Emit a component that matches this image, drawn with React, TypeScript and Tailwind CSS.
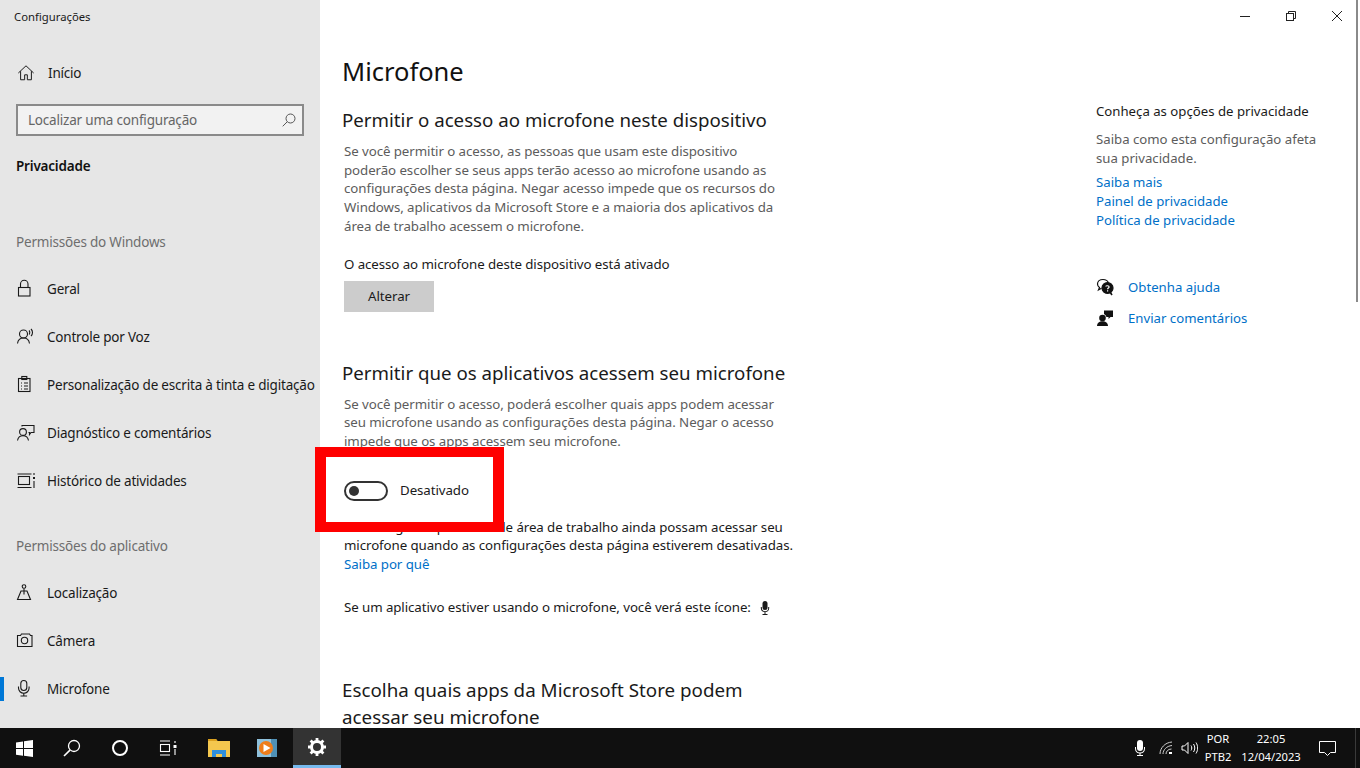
import type { ReactNode } from "react";

function Svg({ children, size = 20, className = "" }: { children: ReactNode; size?: number; className?: string }) {
  return (
    <svg width={size} height={size} viewBox="0 0 20 20" fill="none" stroke="currentColor" strokeWidth="1.1" className={className}>
      {children}
    </svg>
  );
}

const homeIcon = (
  <Svg size={18}>
    <path d="M1.500 10L10 2l8.500 8" />
    <path d="M4 8v9.500h4.500V12h3v5.500H16V8" />
  </Svg>
);

const lockIcon = (
  <Svg>
    <rect x="2.500" y="8.500" width="11.500" height="8.500" />
    <path d="M4.500 8.500V5a3.700 3.700 0 0 1 7.500 0v3.500" />
  </Svg>
);

const voiceIcon = (
  <Svg>
    <circle cx="7.500" cy="7" r="4" />
    <path d="M1.500 16.500c.5-3.500 3-5.500 6-5.500s5.500 2 6 5.500" />
    <path d="M13 3.500c1 1 1 3 0 4M15 2c2 2 2 5 0 7" />
  </Svg>
);

const inkIcon = (
  <Svg>
    <rect x="2.500" y="3.500" width="11.500" height="13" />
    <rect x="5.800" y="1.500" width="5" height="3" />
    <path d="M5 8h1M8 8h4M5 11h1M8 11h4M5 14h1M8 14h4" />
  </Svg>
);

const diagIcon = (
  <Svg>
    <circle cx="7" cy="9" r="3.400" />
    <path d="M1.500 17.500c.5-3 2.700-4.700 5.500-4.700s5 1.700 5.500 4.700" />
    <path d="M6 3.500V2.500h12v7h-3l-1.500 2v-2h-1" />
  </Svg>
);

const historyIcon = (
  <Svg>
    <rect x="2.500" y="5.500" width="11" height="8" />
    <path d="M1.500 3h14M1.500 16.500h14M18 2v2M18 10v7" />
    <rect x="17" y="6" width="2" height="2" fill="currentColor" stroke="none" />
  </Svg>
);

const locationIcon = (
  <Svg>
    <circle cx="8" cy="3.500" r="1.800" />
    <path d="M8 5.500v6M5 8h6l3.500 8.500h-13z" />
  </Svg>
);

const cameraIcon = (
  <Svg>
    <path d="M1.500 4.500h3l1-1.500h8l1 1.500h1.500v11h-14.500z" />
    <circle cx="8.500" cy="9.500" r="3.200" />
  </Svg>
);

const micIcon = (
  <Svg>
    <rect x="4.800" y="1.500" width="6" height="10" rx="3" />
    <path d="M2.500 7.500v1.500a5.300 5.300 0 0 0 10.600 0V7.500M7.800 14.300v2.700M4.500 17h6.600" />
  </Svg>
);

function NavRow({ icon, label, active }: { icon: ReactNode; label: string; active?: boolean }) {
  return (
    <div className="relative h-12 flex items-center pl-[16px] text-[#1a1a1a]">
      {active && <span className="absolute left-0 top-[12px] h-6 w-1 bg-[#0078d7]" />}
      <span className="w-[31px] shrink-0 flex items-center">{icon}</span>
      <span className="whitespace-nowrap">{label}</span>
    </div>
  );
}

function Sidebar() {
  return (
    <aside className="w-[320px] shrink-0 bg-[#e6e6e6] flex flex-col overflow-hidden text-[13.5px] tracking-[-0.2px]">
      <div className="h-[34px] pl-[14px] pt-[9px] text-[11.3px] tracking-normal leading-4 text-[#1a1a1a]">Configurações</div>
      <div className="mt-[15px] h-12 -mb-[3px] flex items-center pl-[17px] text-[#1a1a1a]">
        <span className="w-[31px] shrink-0 flex">{homeIcon}</span>
        Início
      </div>
      <div className="mx-[16px] mt-[10px] h-[32px] shrink-0 border-2 border-[#8a8a8a] bg-[#f2f2f2] flex items-center justify-between pl-[10px] pr-[6px] text-[#666666]">
        <span>Localizar uma configuração</span>
        <svg width="14" height="14" viewBox="0 0 14 14" fill="none" stroke="#555555" strokeWidth="1">
          <circle cx="8.500" cy="5.500" r="4.500" />
          <path d="M5.200 8.800L.7 13.300" />
        </svg>
      </div>
      <div className="mt-[20px] pl-[16px] h-[20px] leading-5 font-semibold text-[#111111]">Privacidade</div>
      <div className="mt-[56px] pl-[16px] h-[20px] leading-5 text-[#6e6e6e]">Permissões do Windows</div>
      <div className="mt-[13px]">
        <NavRow icon={lockIcon} label="Geral" />
        <NavRow icon={voiceIcon} label="Controle por Voz" />
        <NavRow icon={inkIcon} label="Personalização de escrita à tinta e digitação" />
        <NavRow icon={diagIcon} label="Diagnóstico e comentários" />
        <NavRow icon={historyIcon} label="Histórico de atividades" />
      </div>
      <div className="mt-[31px] pl-[16px] h-[20px] leading-5 text-[#6e6e6e]">Permissões do aplicativo</div>
      <div className="mt-[13px]">
        <NavRow icon={locationIcon} label="Localização" />
        <NavRow icon={cameraIcon} label="Câmera" />
        <NavRow icon={micIcon} label="Microfone" active />
      </div>
    </aside>
  );
}

function Body({ lines, className = "" }: { lines: string[]; className?: string }) {
  return (
    <div className={`shrink-0 leading-[18.700px] text-[#5c5c5c] pl-[2px] whitespace-nowrap ${className}`}>
      {lines.map((l) => (
        <div key={l}>{l}</div>
      ))}
    </div>
  );
}

function MainColumn() {
  return (
    <div className="w-[700px] shrink-0 pl-[22px] flex flex-col text-[#1a1a1a] text-[13.3px] tracking-[-0.08px]">
      <h1 className="shrink-0 mt-[51px] text-[25.500px] tracking-normal leading-10 font-normal text-[#111111]">Microfone</h1>
      <h2 className="shrink-0 mt-[15px] text-[18.700px] tracking-normal leading-7 font-normal">Permitir o acesso ao microfone neste dispositivo</h2>
      <Body
        className="mt-[8px]"
        lines={[
          "Se você permitir o acesso, as pessoas que usam este dispositivo",
          "poderão escolher se seus apps terão acesso ao microfone usando as",
          "configurações desta página. Negar acesso impede que os recursos do",
          "Windows, aplicativos da Microsoft Store e a maioria dos aplicativos da",
          "área de trabalho acessem o microfone.",
        ]}
      />
      <div className="shrink-0 mt-[18px] pl-[2px] leading-5">O acesso ao microfone deste dispositivo está ativado</div>
      <div className="shrink-0 mt-[7px] ml-[2px] w-[90px] h-[31px] pt-[2px] bg-[#cccccc] flex items-center justify-center">Alterar</div>
      <h2 className="shrink-0 mt-[47px] text-[18.700px] tracking-normal leading-7 font-normal">Permitir que os aplicativos acessem seu microfone</h2>
      <Body
        className="mt-[8px]"
        lines={[
          "Se você permitir o acesso, poderá escolher quais apps podem acessar",
          "seu microfone usando as configurações desta página. Negar o acesso",
          "impede que os apps acessem seu microfone.",
        ]}
      />
      <div className="shrink-0 mt-[30px] ml-[2px] h-5 flex items-center">
        <span className="w-[44px] h-[20px] rounded-full border-2 border-[#333333] flex items-center pl-[3px]">
          <span className="w-[10px] h-[10px] rounded-full bg-[#333333]" />
        </span>
        <span className="ml-[12px] text-[#1a1a1a]">Desativado</span>
      </div>
      <div className="shrink-0 mt-[17px] pl-[2px] leading-[18.700px] whitespace-nowrap">
        <div>Talvez alguns aplicativos de área de trabalho ainda possam acessar seu</div>
        <div>microfone quando as configurações desta página estiverem desativadas.</div>
        <div className="text-[#0070c8]">Saiba por quê</div>
      </div>
      <div className="shrink-0 mt-[24px] pl-[2px] h-5 flex items-center">
        Se um aplicativo estiver usando o microfone, você verá este ícone:
        <svg width="12" height="16" viewBox="0 0 12 16" className="ml-[8px] text-[#1a1a1a]" fill="currentColor">
          <rect x="3.500" y="1" width="5" height="9" rx="2.500" />
          <path d="M1.800 7h1v1a3.200 3.200 0 0 0 6.400 0V7h1v1a4.200 4.200 0 0 1-3.700 4.100V14h2v1h-5v-1h2v-1.900A4.200 4.200 0 0 1 1.800 8z" />
        </svg>
      </div>
      <h2 className="shrink-0 mt-[59px] text-[18.800px] tracking-normal leading-[27px] font-normal whitespace-nowrap">
        Escolha quais apps da Microsoft Store podem
        <br />
        acessar seu microfone
      </h2>
    </div>
  );
}

function RightColumn() {
  return (
    <div className="ml-[76px] w-[250px] flex flex-col text-[13.2px]">
      <div className="mt-[101px] leading-5 text-[#1a1a1a]">Conheça as opções de privacidade</div>
      <div className="mt-[9px] leading-[18.700px] text-[#5c5c5c]">
        Saiba como esta configuração afeta
        <br />
        sua privacidade.
      </div>
      <div className="mt-[6px] leading-[19px] text-[#0070c8]">
        <div>Saiba mais</div>
        <div>Painel de privacidade</div>
        <div>Política de privacidade</div>
      </div>
      <div className="mt-[47px] h-5 flex items-center text-[#0070c8]">
        <svg width="18" height="18" viewBox="0 0 18 18" className="mr-[14px] text-[#111111] shrink-0" fill="none" stroke="currentColor" strokeWidth="1.200">
          <path d="M7 1.500c-3.200 0-5.500 2-5.500 4.500 0 1.500.8 2.700 2 3.500L2.500 12l3-1.700" />
          <path d="M7 1.500c2.600 0 4.700 1.300 5.300 3.200" />
          <circle cx="11.500" cy="10" r="5.500" fill="currentColor" />
          <path d="M14 14l2 3" strokeWidth="1.600" />
          <path d="M9.800 8.500c.2-1 3.300-1.100 3.300.5 0 1.100-1.500 1-1.500 2.300M11.600 12.300v1.100" stroke="#ffffff" />
        </svg>
        Obtenha ajuda
      </div>
      <div className="mt-[11px] h-5 flex items-center text-[#0070c8]">
        <svg width="18" height="18" viewBox="0 0 18 18" className="mr-[14px] text-[#111111] shrink-0" fill="currentColor">
          <circle cx="6.500" cy="9" r="3.300" />
          <path d="M1 17c0-3 2.300-4.700 5.500-4.700S12 14 12 17z" />
          <path d="M8 1.500h9V8h-2.500L12.500 10V8H10.500a4.600 4.600 0 0 0-2.500-3z" />
        </svg>
        Enviar comentários
      </div>
    </div>
  );
}

function WindowButtons() {
  return (
    <div className="absolute top-0 right-0 flex text-[#222222]">
      <div className="w-[46px] h-[32px] flex items-center justify-center">
        <svg width="10" height="10" viewBox="0 0 10 10" stroke="currentColor" fill="none"><path d="M0 5.500h10" /></svg>
      </div>
      <div className="w-[46px] h-[32px] flex items-center justify-center">
        <svg width="10" height="10" viewBox="0 0 10 10" stroke="currentColor" fill="none"><rect x=".5" y="2.500" width="7" height="7" /><path d="M2.500 2.500v-2h7v7h-2" /></svg>
      </div>
      <div className="w-[46px] h-[32px] flex items-center justify-center">
        <svg width="10" height="10" viewBox="0 0 10 10" stroke="currentColor" fill="none"><path d="M0 0l10 10M10 0L0 10" /></svg>
      </div>
    </div>
  );
}

function Taskbar() {
  return (
    <footer className="h-10 shrink-0 bg-[#101010] flex items-center text-white">
      <div className="w-[48px] h-10 flex items-center justify-center">
        <svg width="17" height="17" viewBox="0 0 17 17" fill="#ffffff"><path d="M0 2.400l7-1v6.700H0zM8 1.300L17 0v8.100H8zM0 9h7v6.700l-7-1zM8 9h9v8l-9-1.300z" /></svg>
      </div>
      <div className="w-[48px] h-10 flex items-center justify-center">
        <svg width="18" height="18" viewBox="0 0 18 18" fill="none" stroke="#ffffff" strokeWidth="1.300"><circle cx="11" cy="7" r="5.500" /><path d="M7 11.200L1 17" strokeWidth="1.600" /></svg>
      </div>
      <div className="w-[48px] h-10 flex items-center justify-center">
        <span className="w-[16px] h-[16px] rounded-full border-2 border-white" />
      </div>
      <div className="w-[48px] h-10 flex items-center justify-center">
        <svg width="18" height="16" viewBox="0 0 18 16" fill="none" stroke="#ffffff" strokeWidth="1.100"><path d="M1 1h10M1 15h10" /><rect x="1.500" y="4.500" width="9" height="7" /><path d="M16 1v2M16 9v6" /><rect x="14.500" y="5" width="3" height="3" fill="#ffffff" stroke="none" /></svg>
      </div>
      <div className="w-[53px] h-10 flex items-center justify-center">
        <svg width="22" height="18" viewBox="0 0 22 18">
          <path d="M0 0h8l1.500 2H22v16H0z" fill="#f4c74e" />
          <path d="M0 0h8l1.500 2H0z" fill="#dca11f" />
          <path d="M4 18v-7h14v7h-4v-3H8v3z" fill="#2f8fdc" />
        </svg>
      </div>
      <div className="w-[48px] h-10 pr-[4px] flex items-center justify-center">
        <svg width="20" height="20" viewBox="0 0 20 20">
          <rect x="0" y="1" width="20" height="18" fill="#8fc1dc" />
          <rect x="14" y="1" width="6" height="18" fill="#4f90b5" />
          <circle cx="9" cy="10" r="7" fill="#ef7d1a" />
          <path d="M6.500 6l7 4-7 4z" fill="#ffffff" />
        </svg>
      </div>
      <div className="w-[48px] h-10 bg-[#333333] border-b-[3px] border-[#76b9ed] flex items-center justify-center">
        <svg width="18" height="18" viewBox="0 0 18 18">
          <circle cx="9" cy="9" r="5.500" fill="none" stroke="#ffffff" strokeWidth="3" />
          <path d="M9 0v3M9 15v3M0 9h3M15 9h3M2.600 2.600l2.200 2.200M13.200 13.200l2.200 2.200M2.600 15.400l2.200-2.200M13.200 4.800l2.200-2.200" stroke="#ffffff" strokeWidth="2.800" />
        </svg>
      </div>
      <div className="ml-auto flex items-center text-[11.2px] leading-[18px] text-white">
        <svg width="12" height="17" viewBox="0 0 12 17" fill="#ffffff" className="mr-[13px]">
          <rect x="3" y="0" width="6" height="11" rx="3" />
          <path d="M1 7h1v1.500a4 4 0 0 0 8 0V7h1v1.500a5 5 0 0 1-4.500 4.900V15H9v1H3v-1h2.500v-1.600A5 5 0 0 1 1 8.500z" />
        </svg>
        <svg width="14" height="14" viewBox="0 0 14 14" fill="none" stroke="#cfcfcf" strokeWidth="1" className="mr-[8px]">
          <path d="M1 13C1 7 6 1.500 13 1M4 13c0-4 3.500-8 9-8.500M7 13c0-2.500 2-5 5.500-5" />
          <rect x="10" y="11" width="3" height="2" fill="#ffffff" stroke="none" />
        </svg>
        <svg width="17" height="14" viewBox="0 0 17 14" fill="none" stroke="#ffffff" strokeWidth="1" className="mr-[2px]">
          <path d="M1 5h2.500L7 1.500v11L3.500 9H1zM10 4.500c1 1.500 1 3.500 0 5M12.500 3c1.700 2.500 1.700 5.500 0 8M15 1.500c2.200 3.500 2.200 7.500 0 11" />
        </svg>
        <div className="w-[36px] text-center">
          <div>POR</div>
          <div>PTB2</div>
        </div>
        <div className="w-[68px] ml-[1px] text-center">
          <div>22:05</div>
          <div>12/04/2023</div>
        </div>
        <div className="w-[44px] flex justify-center">
          <svg width="17" height="15" viewBox="0 0 17 15" fill="none" stroke="#ffffff" strokeWidth="1"><path d="M.5.500h16v11h-5l-3 3-3-3h-5z" /></svg>
        </div>
        <div className="ml-[6px] w-[5px] h-10 border-l border-[#3a3a3a]" />
      </div>
    </footer>
  );
}

export default function App() {
  return (
    <div className="relative w-[1360px] h-[768px] overflow-hidden flex flex-col font-['Noto_Sans','Open_Sans',sans-serif]">
      <div className="flex flex-1 min-h-0">
        <Sidebar />
        <main className="relative flex-1 bg-white flex overflow-hidden">
          <MainColumn />
          <RightColumn />
          <WindowButtons />
          <span className="absolute right-[2px] top-0 h-[302px] w-[2px] bg-[#8a8a8a]" />
        </main>
      </div>
      <Taskbar />
      {/* red highlight drawn over the screenshot */}
      <div className="absolute left-[315px] top-[447px] w-[189px] h-[85px] border-x-[11px] border-y-[10px] border-[#ff0000]" />
    </div>
  );
}
